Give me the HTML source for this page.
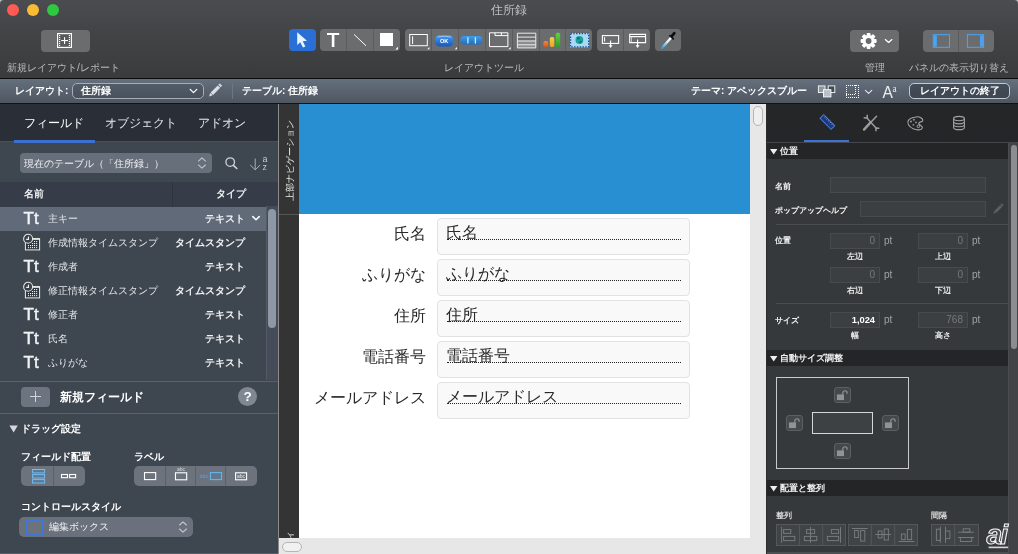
<!DOCTYPE html>
<html lang="ja">
<head>
<meta charset="utf-8">
<title>住所録</title>
<style>
*{box-sizing:border-box;margin:0;padding:0}
html,body{width:1018px;height:554px;overflow:hidden;background:#35383b}
body{font-family:"Liberation Sans",sans-serif;font-size:11px;color:#e6e6e6;position:relative;-webkit-font-smoothing:antialiased}
.abs,#app *{position:absolute}
#app{position:absolute;left:0;top:0;width:1018px;height:554px;overflow:hidden;will-change:transform}
.t{white-space:nowrap;line-height:1}
svg{display:block;overflow:visible}


/* title + toolbar */
#titlebar{left:0;top:0;width:1018px;height:78px;background:linear-gradient(#4b4c4f,#444547 35%,#3a3b3d)}
#tbline{left:0;top:78px;width:1018px;height:1px;background:#0c0c0d}
.light{width:12px;height:12px;border-radius:6px;top:4px}
.tbtn{background:#6b6c6e;border-radius:4px;height:22px;top:30px}
.tlabel{top:62.6px;font-size:10.4px;color:#b9babc;text-align:center}
.sep{width:1px;top:0;height:22px;background:#5b5c5f}

/* layout bar */
#lbar{left:0;top:79px;width:1018px;height:24px;background:linear-gradient(#66707c,#5a6470 45%,#4f5660)}
#lbline{left:0;top:103px;width:1018px;height:1px;background:#0b1220}
.lb{font-size:10px;font-weight:bold;color:#fff;top:86px}

/* left panel */
#left{left:0;top:104px;width:278px;height:450px;background:#3e4650}
#ltabs{left:0;top:0;width:278px;height:38px;background:#292e37}
.ltab{top:13px;font-size:12px;color:#e4e6e9}
.row{left:0;width:266px;height:24px}
.row .n{left:48px;top:7px;font-size:10px;color:#e3e5e8}
.row .ty{right:21px;top:7px;font-size:10px;color:#f0f1f3;font-weight:bold}
.row .tt{left:23.6px;top:2.6px;font-size:17px;font-weight:normal;color:#f2f3f5;-webkit-text-stroke:0.5px #f2f3f5;letter-spacing:0}
.bold{font-weight:bold}

/* centre */
#strip{left:279px;top:104px;width:20px;height:434px;background:#343434}
#blue{left:299px;top:104px;width:451px;height:110px;background:#2890d2}
#white{left:299px;top:214px;width:451px;height:324px;background:#fff}
#vsb{left:750px;top:104px;width:16px;height:434px;background:#e7e7e7}
#hsb{left:279px;top:538px;width:487px;height:16px;background:#e7e7e7}
.fbox{left:138px;width:253px;height:37px;background:#f9f9f9;border:1px solid #e2e2e2;border-radius:4px}
.fbox .v{left:8px;top:6px;font-size:16px;color:#2a2a2a}
.fbox .dl{left:9px;top:20px;width:234px;height:0;border-top:1px dotted #222}
.flab{right:324px;font-size:16px;color:#2a2a2a}

/* right panel */
#right{left:766px;top:104px;width:252px;height:450px;background:#36393c}
#rtabs{left:0;top:0;width:252px;height:39px;background:#252628}
.sec{left:0;width:242px;height:16px;background:#242527}
.sec .t{left:14px;top:4px;font-size:9px;font-weight:bold;color:#f0f0f0}
.rl{font-size:8.2px;font-weight:bold;color:#f2f2f2}
.rs{font-size:8.2px;font-weight:bold;color:#e8e8e8;text-align:center;width:40px}
.inp{height:16px;background:#3c3f42;border:1px solid #484b4e}
.inp .t{right:4px;top:2px;font-size:10px;color:#77797c}
.pt{font-size:10px;color:#a0a2a5}
.hr{height:1px;background:#4b4e51}
.lock{width:17px;height:16px;background:#45484b;border:1px solid #5d6063;border-radius:3px}
.ag{height:22px;border:1px solid #55585b;background:#414447}
</style>
</head>
<body>
<div id="app">

<!-- ================= TITLE / TOOLBAR ================= -->
<div style="left:0;top:0;width:4px;height:4px;background:#b9b9ba"></div><div style="left:1014px;top:0;width:4px;height:4px;background:#b9b9ba"></div>
<div id="titlebar" style="border-radius:4px 4px 0 0">
  <div class="light" style="left:7px;background:#fe5b54"></div>
  <div class="light" style="left:27px;background:#f8bd34"></div>
  <div class="light" style="left:47px;background:#2fc841"></div>
  <div class="t" style="left:0;width:1018px;text-align:center;top:4px;font-size:12px;color:#bebfc1">住所録</div>

  <div class="tbtn" id="b-new" style="left:41px;width:49px">
    <svg width="15" height="15" style="left:16px;top:3px">
      <rect x="0.6" y="0.6" width="13.8" height="13.8" fill="#58595b" stroke="#fff" stroke-width="1.2"/>
      <g fill="#fff"><rect x="2" y="2" width="1.2" height="1.1"/><rect x="2" y="4" width="1.2" height="1.1"/><rect x="2" y="6" width="1.2" height="1.1"/><rect x="2" y="8" width="1.2" height="1.1"/><rect x="2" y="10" width="1.2" height="1.1"/><rect x="2" y="12" width="1.2" height="1.1"/>
      <rect x="11.8" y="2" width="1.2" height="1.1"/><rect x="11.8" y="4" width="1.2" height="1.1"/><rect x="11.8" y="6" width="1.2" height="1.1"/><rect x="11.8" y="8" width="1.2" height="1.1"/><rect x="11.8" y="10" width="1.2" height="1.1"/><rect x="11.8" y="12" width="1.2" height="1.1"/>
      <rect x="4.2" y="7" width="6.8" height="1.1"/><rect x="7" y="4.2" width="1.1" height="6.8"/></g>
    </svg>
  </div>
  <div class="t tlabel" style="left:7px">新規レイアウト/レポート</div>

  <div class="tbtn" id="b-arrow" style="left:289px;top:29px;width:27px;background:#2a6fd6">
    <svg width="27" height="22" style="left:0;top:0"><path d="M8.2,3.3 L8.2,16 L11.2,13.2 L14,18.6 L16.4,17.4 L13.7,12.2 L18,11.8 Z" fill="#e6f5ff"/></svg>
  </div>
  <div class="tbtn" id="g1" style="left:320px;top:29px;width:80px"><div class="sep" style="left:26px"></div><div class="sep" style="left:53px"></div>
    <svg width="80" height="22" style="left:0;top:0">
      <rect x="7" y="4" width="12.2" height="2" fill="#fff"/><rect x="11.8" y="4" width="2.6" height="14" fill="#fff"/>
      <line x1="34" y1="5.4" x2="46" y2="16.8" stroke="#fff" stroke-width="1"/>
      <rect x="60" y="4" width="13" height="13" fill="#fff"/>
      <path d="M78,17.8 L78,20.4 L75.4,20.4 Z" fill="#fff"/>
    </svg>
  </div>
  <div class="tbtn" id="g2" style="left:405px;top:29px;width:187px"><div class="sep" style="left:26px"></div><div class="sep" style="left:53px"></div><div class="sep" style="left:80px"></div><div class="sep" style="left:107px"></div><div class="sep" style="left:134px"></div><div class="sep" style="left:160px"></div>
    <svg width="187" height="22" style="left:0;top:0">
      <defs>
        <linearGradient id="gok" x1="0" y1="0" x2="0" y2="1"><stop offset="0" stop-color="#4a9bee"/><stop offset="1" stop-color="#1659bd"/></linearGradient>
        <linearGradient id="gtab" x1="0" y1="0" x2="0" y2="1"><stop offset="0" stop-color="#3f9de6"/><stop offset="1" stop-color="#1f6fc0"/></linearGradient>
        <linearGradient id="gor" x1="0" y1="0" x2="0" y2="1"><stop offset="0" stop-color="#f08a3a"/><stop offset="1" stop-color="#d9531f"/></linearGradient>
        <linearGradient id="gye" x1="0" y1="0" x2="0" y2="1"><stop offset="0" stop-color="#f7d23b"/><stop offset="1" stop-color="#e6a51f"/></linearGradient>
        <linearGradient id="ggr" x1="0" y1="0" x2="0" y2="1"><stop offset="0" stop-color="#5fd23f"/><stop offset="1" stop-color="#2f9e22"/></linearGradient>
      </defs>
      <!-- field -->
      <rect x="4.7" y="5.5" width="17.6" height="11.2" fill="none" stroke="#fff" stroke-width="1"/>
      <line x1="7.6" y1="7.3" x2="7.6" y2="15" stroke="#fff" stroke-width="1"/>
      <path d="M24.4,18 L24.4,20.2 L22.2,20.2 Z" fill="#fff"/>
      <!-- OK button -->
      <rect x="29.8" y="6.2" width="18.8" height="11.2" rx="4.5" fill="url(#gok)"/>
      <path d="M32.5,8 Q39,6.3 46,8" fill="none" stroke="#a9d4ff" stroke-width="0.8"/>
      <text x="39.2" y="14.1" font-family="Liberation Sans, sans-serif" font-size="5.6" font-weight="bold" fill="#fff" text-anchor="middle">OK</text>
      <path d="M52,18 L52,20.2 L49.8,20.2 Z" fill="#fff"/>
      <!-- button bar -->
      <rect x="55.4" y="7.1" width="21.9" height="8.3" rx="4" fill="url(#gtab)"/>
      <line x1="62.9" y1="8.2" x2="62.9" y2="14.6" stroke="#c9e9ff" stroke-width="1.3"/>
      <line x1="70.4" y1="8.2" x2="70.4" y2="14.6" stroke="#c9e9ff" stroke-width="1.3"/>
      <!-- tab control -->
      <path d="M84.5,3.8 H102.9 V17.6 H84.5 Z M90,3.8 V6.6 H102.9 M96.4,3.8 V6.6" fill="none" stroke="#fff" stroke-width="1"/>
      <path d="M105.6,18 L105.6,20.2 L103.4,20.2 Z" fill="#fff"/>
      <!-- portal -->
      <rect x="112.4" y="11.5" width="18.4" height="7.4" fill="#8c8d8f"/>
      <path d="M112.4,4.2 H130.8 V18.9 H112.4 Z M112.4,8.1 H130.8 M112.4,12 H130.8 M112.4,15.8 H130.8" fill="none" stroke="#ececec" stroke-width="1"/>
      <!-- chart -->
      <rect x="138.4" y="12.1" width="4.7" height="6" rx="1.8" fill="url(#gor)"/>
      <rect x="144.8" y="8" width="4.5" height="10.1" rx="1.8" fill="url(#gye)"/>
      <rect x="150.7" y="3.8" width="4.5" height="14.3" rx="1.8" fill="url(#ggr)"/>
      <!-- web viewer -->
      <rect x="165" y="4" width="19.2" height="14.4" fill="#a9d9f4"/>
      <rect x="165.5" y="4.5" width="18.2" height="13.4" fill="none" stroke="#1d4f8c" stroke-width="1.4" stroke-dasharray="1.4 1.4"/>
      <circle cx="174.4" cy="11" r="3.9" fill="#17a3a8"/>
      <path d="M172,8.6 q2,-1 3,0.4 q-0.4,1.6 -2,1.8 q-1.4,-0.6 -1,-2.2 Z M174.6,12 q1.8,-0.6 2.6,0.6 q-0.8,1.8 -2.4,1.8 q-0.8,-1 -0.2,-2.4 Z" fill="#0c7a46"/>
    </svg>
  </div>
  <div class="tbtn" id="g3" style="left:597px;top:29px;width:53px"><div class="sep" style="left:26px"></div>
    <svg width="54" height="22" style="left:0;top:0">
      <rect x="5.4" y="6.6" width="16.2" height="7.8" fill="none" stroke="#fff" stroke-width="1.1"/>
      <line x1="7.6" y1="8.2" x2="7.6" y2="12.6" stroke="#fff" stroke-width="1"/>
      <line x1="13.6" y1="11.4" x2="13.6" y2="17" stroke="#fff" stroke-width="1.1"/>
      <path d="M11.6,16.2 H15.6 L13.6,18.9 Z" fill="#fff"/>
      <path d="M32.7,5.4 H48.6 V13.6 H32.7 Z M32.7,7.6 H48.6" fill="none" stroke="#fff" stroke-width="1.1"/>
      <line x1="34.4" y1="7.6" x2="34.4" y2="13.6" stroke="#fff" stroke-width="0.8" opacity=".8"/>
      <line x1="40.6" y1="10.6" x2="40.6" y2="17" stroke="#fff" stroke-width="1.1"/>
      <path d="M38.6,16.2 H42.6 L40.6,18.9 Z" fill="#fff"/>
    </svg>
  </div>
  <div class="tbtn" id="g4" style="left:655px;top:29px;width:26px">
    <svg width="26" height="22" style="left:0;top:0">
      <defs><linearGradient id="gdrop" gradientUnits="userSpaceOnUse" x1="16" y1="9" x2="7.5" y2="18.5"><stop offset="0" stop-color="#ffffff"/><stop offset="0.45" stop-color="#cfeaf8"/><stop offset="1" stop-color="#3a9ad6"/></linearGradient></defs>
      <path d="M15.8,9 L9.6,16 Q8.2,17.4 7.2,18.8" stroke="url(#gdrop)" stroke-width="2.5" stroke-linecap="round" fill="none"/>
      <path d="M19.3,4.1 L16.7,7.3" stroke="#0e0f12" stroke-width="2.7" stroke-linecap="round"/>
      <path d="M15,6.7 L18.2,9.8" stroke="#0e0f12" stroke-width="1.8" stroke-linecap="round"/>
    </svg>
  </div>
  <div class="t tlabel" style="left:384px;width:200px">レイアウトツール</div>

  <div class="tbtn" id="b-gear" style="left:850px;width:49px">
    <svg width="49" height="22" style="left:0;top:0">
      <g transform="translate(18.6,11)" fill="#fff">
        <g id="teeth"><rect x="-1.9" y="-8" width="3.8" height="16" rx="0.8"/><rect x="-1.9" y="-8" width="3.8" height="16" rx="0.8" transform="rotate(45)"/><rect x="-1.9" y="-8" width="3.8" height="16" rx="0.8" transform="rotate(90)"/><rect x="-1.9" y="-8" width="3.8" height="16" rx="0.8" transform="rotate(135)"/></g>
        <circle r="6.1"/><circle r="2.9" fill="#6b6c6e"/>
      </g>
      <path d="M35.3,9.6 L38.6,12.4 L41.9,9.6" fill="none" stroke="#fff" stroke-width="1.3" stroke-linecap="round" stroke-linejoin="round"/>
    </svg>
  </div>
  <div class="t tlabel" style="left:825px;width:100px">管理</div>
  <div class="tbtn" id="b-panel" style="left:923px;width:71px"><div class="sep" style="left:35px"></div>
    <svg width="71" height="22" style="left:0;top:0">
      <rect x="10.3" y="4.7" width="16.2" height="12.6" fill="none" stroke="#4aa6f5" stroke-width="1"/>
      <rect x="11" y="5.4" width="2.8" height="11.2" fill="#4aa6f5"/>
      <rect x="44.4" y="4.7" width="16.2" height="12.6" fill="none" stroke="#4aa6f5" stroke-width="1"/>
      <rect x="57.1" y="5.4" width="2.8" height="11.2" fill="#4aa6f5"/>
    </svg>
  </div>
  <div class="t tlabel" style="left:899px;width:119px">パネルの表示切り替え</div>
</div>
<div id="tbline"></div>

<!-- ================= LAYOUT BAR ================= -->
<div id="lbar"></div>
<div id="lbline"></div>
<div class="t lb" style="left:15px">レイアウト:</div>
<div id="lsel" style="left:72px;top:83px;width:132px;height:16px;border:1px solid #a4aeb9;border-radius:5px;background:rgba(48,56,68,.28)"></div>
<svg width="1018" height="24" style="left:0;top:79px">
  <path d="M190.2,10.4 L193.5,13.6 L196.8,10.4" fill="none" stroke="#fff" stroke-width="1.3" stroke-linecap="round" stroke-linejoin="round"/>
  <g transform="translate(215,11.6) rotate(45)" fill="#d9dfe6"><rect x="-1.7" y="-8.4" width="3.4" height="2"/><rect x="-1.7" y="-5.6" width="3.4" height="10"/><path d="M-1.7,4.9 H1.7 L0,8.4 Z"/></g>
  <rect x="818.4" y="6.9" width="6.6" height="6.6" fill="#8f98a1" stroke="#e8ebee" stroke-width="1"/>
  <rect x="828.2" y="6.9" width="6.6" height="6.6" fill="#414952" stroke="#e8ebee" stroke-width="1"/>
  <rect x="823.5" y="10.7" width="7.4" height="7.2" fill="#b9c0c7" stroke="#f4f6f7" stroke-width="1"/>
  <path d="M846,6h1v1h-1zM846,8h1v1h-1zM846,10h1v1h-1zM846,12h1v1h-1zM846,14h1v1h-1zM846,15h1v1h-1zM846,16h1v1h-1zM846,18h1v1h-1zM848,6h1v1h-1zM848,15h1v1h-1zM848,18h1v1h-1zM850,6h1v1h-1zM850,15h1v1h-1zM850,18h1v1h-1zM852,6h1v1h-1zM852,15h1v1h-1zM852,18h1v1h-1zM854,6h1v1h-1zM854,15h1v1h-1zM854,18h1v1h-1zM855,6h1v1h-1zM855,8h1v1h-1zM855,10h1v1h-1zM855,12h1v1h-1zM855,14h1v1h-1zM856,6h1v1h-1zM856,18h1v1h-1zM858,6h1v1h-1zM858,8h1v1h-1zM858,10h1v1h-1zM858,12h1v1h-1zM858,14h1v1h-1zM858,16h1v1h-1zM858,18h1v1h-1z" fill="#fff" shape-rendering="crispEdges"/>
  <path d="M865.4,11.4 L868.6,14.4 L871.8,11.4" fill="none" stroke="#e4e8ec" stroke-width="1.1" stroke-linecap="round" stroke-linejoin="round"/>
  <text x="882.6" y="18.6" font-family="Liberation Sans, sans-serif" font-size="15.6" fill="#e9ecef">A</text>
  <text x="892.4" y="12.8" font-family="Liberation Serif, serif" font-size="9.4" fill="#e9ecef">a</text>
</svg>
<div class="t lb" style="left:81px">住所録</div>
<div style="left:232px;top:83px;width:1px;height:16px;background:#6d7782"></div>
<div class="t lb" style="left:242px">テーブル: 住所録</div>
<div class="t lb" style="left:691px">テーマ: アペックスブルー</div>
<div id="lend" style="left:909px;top:83px;width:101px;height:16px;border:1px solid #c3c9d0;border-radius:5px;background:rgba(44,52,64,.55)"></div>
<div class="t lb" style="left:909px;width:101px;text-align:center">レイアウトの終了</div>

<!-- ================= LEFT PANEL ================= -->
<div id="left">
  <div id="ltabs">
    <div class="t ltab" style="left:24px;color:#fff">フィールド</div>
    <div class="t ltab" style="left:105px">オブジェクト</div>
    <div class="t ltab" style="left:198px">アドオン</div>
    <div style="left:0;top:37px;width:278px;height:1px;background:#4a505a"></div>
    <div style="left:14px;top:36px;width:81px;height:3px;background:#3b6fd0"></div>
  </div>
  <div id="tsel" style="left:20px;top:49px;width:192px;height:20px;border-radius:4px;background:#676f7b">
    <svg width="10" height="14" style="left:177px;top:3px"><path d="M1.6,5 L5,1.8 L8.4,5 M1.6,9 L5,12.2 L8.4,9" fill="none" stroke="#bcc2cb" stroke-width="1.1" stroke-linecap="round" stroke-linejoin="round"/></svg>
  </div>
  <svg width="14" height="14" style="left:224px;top:52px"><circle cx="6.2" cy="6.1" r="4.3" fill="none" stroke="#cfd4da" stroke-width="1.3"/><line x1="9.4" y1="9.3" x2="12.8" y2="12.5" stroke="#cfd4da" stroke-width="1.6" stroke-linecap="round"/></svg>
  <svg width="20" height="16" style="left:249px;top:52px"><path d="M6.2,2.6 V13.6 M1.2,9 L6.2,13.8 L11.2,9" fill="none" stroke="#a9b0ba" stroke-width="1"/><text x="13.4" y="5.8" font-family="Liberation Sans, sans-serif" font-size="9" fill="#c3c8d0">a</text><text x="13.6" y="14.2" font-family="Liberation Sans, sans-serif" font-size="9" fill="#c3c8d0">z</text></svg>
  <div class="t" style="left:24px;top:55px;font-size:10px;color:#f1f2f4">現在のテーブル（「住所録」）</div>

  <div id="lhead" style="left:0;top:78px;width:278px;height:25px;background:#363d48">
    <div class="t" style="left:24px;top:7px;font-size:10px;color:#f0f1f3;font-weight:bold">名前</div>
    <div class="t" style="right:32px;top:7px;font-size:10px;color:#f0f1f3;font-weight:bold">タイプ</div>
    <div style="left:172px;top:0;width:1px;height:25px;background:#2f353f"></div>
  </div>

  <div class="row" style="top:103px;background:#606a78"><div class="t tt">Tt</div><div class="t n">主キー</div><div class="t ty">テキスト</div><svg width="10" height="8" style="left:251px;top:8px"><path d="M1.8,1.6 L5,4.8 L8.2,1.6" fill="none" stroke="#fff" stroke-width="1.5" stroke-linecap="round" stroke-linejoin="round"/></svg></div>
  <div class="row" style="top:127px"><svg width="20" height="16" style="left:22px;top:3px"><rect x="3.4" y="4.7" width="14.2" height="11.2" fill="#30353d" stroke="#ececec" stroke-width="1"/><rect x="3.4" y="4.2" width="14.2" height="1.6" fill="#ececec"/><circle cx="6.1" cy="4.7" r="4.5" fill="#3a4049" stroke="#e6e6e6" stroke-width="1.1"/><path d="M6.5,2.4 V5.4 H4.2" fill="none" stroke="#f2f2f2" stroke-width="1.1"/><g fill="#f0f0f0"><rect x="12" y="7" width="1.1" height="1.1"/><rect x="14.1" y="7" width="1.1" height="1.1"/><rect x="10" y="9" width="1.1" height="1.1"/><rect x="12" y="9" width="1.1" height="1.1"/><rect x="14.1" y="9" width="1.1" height="1.1"/><rect x="5.9" y="11" width="1.1" height="1.1"/><rect x="8" y="11" width="1.1" height="1.1"/><rect x="10" y="11" width="1.1" height="1.1"/><rect x="12" y="11" width="1.1" height="1.1"/><rect x="14.1" y="11" width="1.1" height="1.1"/><rect x="5.9" y="13.1" width="1.1" height="1.1"/><rect x="8" y="13.1" width="1.1" height="1.1"/><rect x="10" y="13.1" width="1.1" height="1.1"/><rect x="12" y="13.1" width="1.1" height="1.1"/><rect x="14.1" y="13.1" width="1.1" height="1.1"/></g></svg><div class="t n">作成情報タイムスタンプ</div><div class="t ty">タイムスタンプ</div></div>
  <div class="row" style="top:151px"><div class="t tt">Tt</div><div class="t n">作成者</div><div class="t ty">テキスト</div></div>
  <div class="row" style="top:175px"><svg width="20" height="16" style="left:22px;top:3px"><rect x="3.4" y="4.7" width="14.2" height="11.2" fill="#30353d" stroke="#ececec" stroke-width="1"/><rect x="3.4" y="4.2" width="14.2" height="1.6" fill="#ececec"/><circle cx="6.1" cy="4.7" r="4.5" fill="#3a4049" stroke="#e6e6e6" stroke-width="1.1"/><path d="M6.5,2.4 V5.4 H4.2" fill="none" stroke="#f2f2f2" stroke-width="1.1"/><g fill="#f0f0f0"><rect x="12" y="7" width="1.1" height="1.1"/><rect x="14.1" y="7" width="1.1" height="1.1"/><rect x="10" y="9" width="1.1" height="1.1"/><rect x="12" y="9" width="1.1" height="1.1"/><rect x="14.1" y="9" width="1.1" height="1.1"/><rect x="5.9" y="11" width="1.1" height="1.1"/><rect x="8" y="11" width="1.1" height="1.1"/><rect x="10" y="11" width="1.1" height="1.1"/><rect x="12" y="11" width="1.1" height="1.1"/><rect x="14.1" y="11" width="1.1" height="1.1"/><rect x="5.9" y="13.1" width="1.1" height="1.1"/><rect x="8" y="13.1" width="1.1" height="1.1"/><rect x="10" y="13.1" width="1.1" height="1.1"/><rect x="12" y="13.1" width="1.1" height="1.1"/><rect x="14.1" y="13.1" width="1.1" height="1.1"/></g></svg><div class="t n">修正情報タイムスタンプ</div><div class="t ty">タイムスタンプ</div></div>
  <div class="row" style="top:199px"><div class="t tt">Tt</div><div class="t n">修正者</div><div class="t ty">テキスト</div></div>
  <div class="row" style="top:223px"><div class="t tt">Tt</div><div class="t n">氏名</div><div class="t ty">テキスト</div></div>
  <div class="row" style="top:247px"><div class="t tt">Tt</div><div class="t n">ふりがな</div><div class="t ty">テキスト</div></div>

  <div id="lsb" style="left:266px;top:102px;width:12px;height:174px;background:#454c57;border-left:1px solid #525a65"></div>
  <div style="left:268px;top:105px;width:8px;height:119px;border-radius:4px;background:#8d97a5"></div>

  <div style="left:0;top:277px;width:278px;height:1px;background:#59616c"></div>
  <div id="addbtn" style="left:21px;top:283px;width:29px;height:20px;border-radius:4px;background:#6c747f"><svg width="29" height="20" style="left:0;top:0"><path d="M9,9.5 H20 M14.5,4 V15" fill="none" stroke="#d2d6db" stroke-width="1"/></svg></div>
  <div class="t bold" style="left:60px;top:287px;font-size:12px;color:#fff">新規フィールド</div>
  <div id="help" style="left:238px;top:283px;width:19px;height:19px;border-radius:10px;background:#7f8792"></div>
  <div class="t bold" style="left:238px;top:286px;width:19px;text-align:center;font-size:13.5px;color:#fff">?</div>
  <div style="left:0;top:309px;width:278px;height:1px;background:#59616c"></div>

  <svg width="10" height="8" style="left:9px;top:321px"><path d="M0.4,0.6 H8.8 L4.6,7.4 Z" fill="#d4d8dd"/></svg><div class="t bold" style="left:21px;top:320px;font-size:10px;color:#fff">ドラッグ設定</div>
  <div class="t bold" style="left:21px;top:348px;font-size:10px;color:#fff">フィールド配置</div>
  <div class="t bold" style="left:134px;top:348px;font-size:10px;color:#fff">ラベル</div>
  <div id="fg1" style="left:21px;top:362px;width:64px;height:20px;border-radius:5px;background:#6c737d"><div style="left:32px;top:0;width:1px;height:20px;background:#5a616b"></div>
    <svg width="64" height="20" style="left:0;top:0"><g fill="#4d7ea8" fill-opacity=".55" stroke="#72bdf2" stroke-width="1"><rect x="11.6" y="3.5" width="12" height="3.4"/><rect x="11.6" y="8.6" width="12" height="3.4"/><rect x="11.6" y="13.6" width="12" height="3.4"/></g><g fill="none" stroke="#fff" stroke-width="1.1"><rect x="40.5" y="8.5" width="6" height="3.2"/><rect x="48.6" y="8.5" width="6" height="3.2"/></g></svg></div>
  <div id="fg2" style="left:134px;top:362px;width:123px;height:20px;border-radius:5px;background:#6c737d"><div style="left:31px;top:0;width:1px;height:20px;background:#5a616b"></div><div style="left:61px;top:0;width:1px;height:20px;background:#5a616b"></div><div style="left:91px;top:0;width:1px;height:20px;background:#5a616b"></div>
    <svg width="123" height="20" style="left:0;top:0"><g fill="none" stroke="#fff" stroke-width="1.1"><rect x="10.5" y="6.6" width="11.2" height="7"/><rect x="41.5" y="6.8" width="11.2" height="7"/><rect x="101.6" y="6.8" width="11" height="7"/></g>
    <rect x="76.4" y="6.6" width="11.2" height="7" fill="#567fa3" fill-opacity=".5" stroke="#69b4ec" stroke-width="1.1"/>
    <text x="47" y="4.9" font-family="Liberation Sans, sans-serif" font-size="5" fill="#d9dce0" text-anchor="middle">abc</text>
    <text x="70" y="12" font-family="Liberation Sans, sans-serif" font-size="5" font-weight="bold" fill="#4f9be0" text-anchor="middle">abc</text>
    <text x="107.1" y="12" font-family="Liberation Sans, sans-serif" font-size="5" fill="#e6e8eb" text-anchor="middle">abc</text></svg></div>
  <div class="t bold" style="left:21px;top:398px;font-size:10px;color:#fff">コントロールスタイル</div>
  <div id="csel" style="left:19px;top:413px;width:174px;height:20px;border-radius:5px;background:#6a717c">
    <div style="left:7px;top:2px;width:18px;height:16px;border:2px solid #3f78d2;background:#6d727b"></div>
    <svg width="10" height="14" style="left:159px;top:3px"><path d="M1.6,5 L5,1.8 L8.4,5 M1.6,9 L5,12.2 L8.4,9" fill="none" stroke="#c3c8cf" stroke-width="1.1" stroke-linecap="round" stroke-linejoin="round"/></svg></div>
  <div class="t" style="left:49px;top:418px;font-size:10px;color:#f1f2f4">編集ボックス</div>
  <div style="left:0;top:449px;width:278px;height:1px;background:#555d68"></div>
</div>
<div style="left:278px;top:104px;width:1px;height:450px;background:#8a8a8a"></div>

<!-- ================= CENTRE ================= -->
<div id="strip" style="overflow:hidden">
  <div style="left:0;top:110px;width:20px;height:1px;background:#555"></div>
  <div class="t" style="left:10.5px;top:55.5px;font-size:8.7px;color:#ececec;transform:translate(-50%,-50%) rotate(-90deg)">上部ナビゲーション</div>
  <div class="t" style="left:10.5px;top:440px;font-size:8.7px;color:#ececec;transform:translate(-50%,-50%) rotate(-90deg)">ボディ</div>
</div>
<div id="blue"></div>
<div id="white">
  <div class="t flab" style="top:12px">氏名</div>
  <div class="t flab" style="top:53px">ふりがな</div>
  <div class="t flab" style="top:94px">住所</div>
  <div class="t flab" style="top:135px">電話番号</div>
  <div class="t flab" style="top:176px">メールアドレス</div>
  <div class="fbox" style="top:4px"><div class="t v">氏名</div><div class="dl"></div></div>
  <div class="fbox" style="top:45px"><div class="t v">ふりがな</div><div class="dl"></div></div>
  <div class="fbox" style="top:86px"><div class="t v">住所</div><div class="dl"></div></div>
  <div class="fbox" style="top:127px"><div class="t v">電話番号</div><div class="dl"></div></div>
  <div class="fbox" style="top:168px"><div class="t v">メールアドレス</div><div class="dl"></div></div>
</div>
<div id="vsb"><div style="left:3px;top:2px;width:10px;height:20px;border-radius:5px;background:#efefef;border:1px solid #b4b4b4"></div></div>
<div id="hsb"><div style="left:3px;top:4px;width:20px;height:10px;border-radius:5px;background:#f1f1f1;border:1px solid #b4b4b4"></div></div>

<!-- ================= RIGHT PANEL ================= -->
<div id="right">
  <div id="rtabs">
    <div style="left:38px;top:36px;width:45px;height:3px;background:#3d72d6"></div>
    <svg width="252" height="38" style="left:0;top:0">
      <g transform="translate(61.4,18) rotate(45)"><rect x="-7.8" y="-2.6" width="15.6" height="5.2" fill="#1b3885" stroke="#4a7edb" stroke-width="1"/><path d="M-5,-2.6 v1.8 M-2.5,-2.6 v1.8 M0,-2.6 v1.8 M2.5,-2.6 v1.8 M5,-2.6 v1.8" stroke="#7fa6ea" stroke-width="0.7"/></g>
      <g stroke="#9d9d9d" fill="none" stroke-linecap="round">
        <path d="M98,25.6 L104.6,18.4" stroke-width="2.4"/><path d="M104.6,18.4 L110.6,12.2" stroke-width="1.5"/>
        <path d="M101.2,14.2 L110,24" stroke-width="1.4"/>
        <path d="M101.2,14.2 L98.2,13.8 M101.2,14.2 L101.2,11.2 M110,24 L112.8,24.2 M110,24 L110,26.8" stroke-width="1.5"/>
      </g>
      <g transform="translate(0,3.8)"><path d="M148.8,9.4 C153.6,8 157.4,11 156.6,13.2 C155.8,14.6 153,13.4 152.8,15.6 C152.6,17.4 156.8,17.6 156.4,20 C155.6,22.6 150.6,22.6 147.2,21 C142.6,19 140.8,15.2 142.4,12.6 C143.4,10.8 146,9.8 148.8,9.4 Z" fill="none" stroke="#a3a3a3" stroke-width="1.1"/>
      <g fill="#999"><circle cx="145" cy="13.8" r="1"/><circle cx="147.9" cy="11.9" r="1"/><circle cx="150" cy="14.6" r="0.9"/><circle cx="147.4" cy="17" r="0.9"/></g><circle cx="152.4" cy="18.5" r="1.3" fill="none" stroke="#b0b0b0" stroke-width="0.9"/></g>
      <g fill="none" stroke="#a3a3a3" stroke-width="1.1"><ellipse cx="193" cy="14.6" rx="5.4" ry="2.2"/><path d="M187.6,14.6 V23.4 C187.6,26.4 198.4,26.4 198.4,23.4 V14.6 M187.6,17.6 C187.6,20.6 198.4,20.6 198.4,17.6 M187.6,20.5 C187.6,23.5 198.4,23.5 198.4,20.5"/></g>
    </svg>
  </div>
  <div style="left:0;top:38px;width:252px;height:1px;background:#45474a"></div>
  <div class="sec" style="top:39px"><svg width="8" height="6" style="left:4px;top:6px"><path d="M0,0 H7.4 L3.7,5.6 Z" fill="#efefef"/></svg><div class="t">位置</div></div>

  <div class="t rl" style="left:9px;top:78.5px">名前</div>
  <div class="inp" style="left:64px;top:73px;width:156px"></div>
  <div class="t rl" style="left:9px;top:102.5px">ポップアップヘルプ</div>
  <div class="inp" style="left:94px;top:97px;width:126px"></div>
  <svg width="14" height="14" style="left:225px;top:98px"><g transform="translate(7,7) rotate(45)" fill="#5d6063"><rect x="-1.4" y="-6.6" width="2.8" height="1.6"/><rect x="-1.4" y="-4.4" width="2.8" height="7.8"/><path d="M-1.4,3.8 H1.4 L0,6.6 Z"/></g></svg>
  <div class="hr" style="left:10px;top:120px;width:232px"></div>

  <div class="t rl" style="left:9px;top:133px">位置</div>
  <div class="inp" style="left:64px;top:129px;width:50px"><div class="t">0</div></div><div class="t pt" style="left:118px;top:132px">pt</div>
  <div class="inp" style="left:152px;top:129px;width:50px"><div class="t">0</div></div><div class="t pt" style="left:206px;top:132px">pt</div>
  <div class="t rs" style="left:69px;top:149px">左辺</div>
  <div class="t rs" style="left:157px;top:149px">上辺</div>
  <div class="inp" style="left:64px;top:163px;width:50px"><div class="t">0</div></div><div class="t pt" style="left:118px;top:166px">pt</div>
  <div class="inp" style="left:152px;top:163px;width:50px"><div class="t">0</div></div><div class="t pt" style="left:206px;top:166px">pt</div>
  <div class="t rs" style="left:69px;top:183px">右辺</div>
  <div class="t rs" style="left:157px;top:183px">下辺</div>
  <div class="hr" style="left:10px;top:199px;width:232px"></div>

  <div class="t rl" style="left:9px;top:212.5px">サイズ</div>
  <div class="inp" style="left:64px;top:208px;width:50px"><div class="t" style="color:#fff;font-weight:bold;font-size:9.3px;right:4px;top:3px">1,024</div></div><div class="t pt" style="left:118px;top:211px">pt</div>
  <div class="inp" style="left:152px;top:208px;width:50px"><div class="t">768</div></div><div class="t pt" style="left:206px;top:211px">pt</div>
  <div class="t rs" style="left:69px;top:228px">幅</div>
  <div class="t rs" style="left:157px;top:228px">高さ</div>

  <div class="sec" style="top:246px"><svg width="8" height="6" style="left:4px;top:6px"><path d="M0,0 H7.4 L3.7,5.6 Z" fill="#efefef"/></svg><div class="t">自動サイズ調整</div></div>
  <div style="left:10px;top:273px;width:133px;height:92px;border:1px solid #c9cbcd"></div>
  <div style="left:46px;top:308px;width:61px;height:22px;border:1px solid #d5d7d9;background:#3e4144"></div>
  <div class="lock" style="left:68px;top:283px"><svg width="17" height="16" style="left:-1px;top:-1px"><rect x="2.9" y="7.4" width="7.1" height="5.7" fill="#909395"/><path d="M8.8,7.4 V5.9 A2.15,2.15 0 0 1 13.1,5.9 V6.7" fill="none" stroke="#909395" stroke-width="1.2"/></svg></div>
  <div class="lock" style="left:20px;top:311px"><svg width="17" height="16" style="left:-1px;top:-1px"><rect x="2.9" y="7.4" width="7.1" height="5.7" fill="#909395"/><path d="M8.8,7.4 V5.9 A2.15,2.15 0 0 1 13.1,5.9 V6.7" fill="none" stroke="#909395" stroke-width="1.2"/></svg></div>
  <div class="lock" style="left:116px;top:311px"><svg width="17" height="16" style="left:-1px;top:-1px"><rect x="2.9" y="7.4" width="7.1" height="5.7" fill="#909395"/><path d="M8.8,7.4 V5.9 A2.15,2.15 0 0 1 13.1,5.9 V6.7" fill="none" stroke="#909395" stroke-width="1.2"/></svg></div>
  <div class="lock" style="left:68px;top:339px"><svg width="17" height="16" style="left:-1px;top:-1px"><rect x="2.9" y="7.4" width="7.1" height="5.7" fill="#909395"/><path d="M8.8,7.4 V5.9 A2.15,2.15 0 0 1 13.1,5.9 V6.7" fill="none" stroke="#909395" stroke-width="1.2"/></svg></div>

  <div class="sec" style="top:376px"><svg width="8" height="6" style="left:4px;top:6px"><path d="M0,0 H7.4 L3.7,5.6 Z" fill="#efefef"/></svg><div class="t">配置と整列</div></div>
  <div class="t rl" style="left:10px;top:407.5px;color:#d9d9d9">整列</div>
  <div class="t rl" style="left:165px;top:407.5px;color:#d9d9d9">間隔</div>
  <div class="ag" style="left:10px;top:420px;width:70px"><svg width="70" height="22" style="left:-1px;top:-1px"><path d="M23.5,0 V22 M46.7,0 V22" stroke="#55585b" stroke-width="1"/><g fill="none" stroke="#76797c" stroke-width="1"><path d="M5.6,3 V18.8"/><rect x="7.6" y="5.6" width="7.2" height="3.8"/><rect x="7.6" y="12.4" width="11.2" height="4.2"/><path d="M34.5,3 V18.8"/><rect x="30.6" y="5.6" width="8" height="3.8"/><rect x="28.4" y="12.4" width="12.4" height="4.2"/><path d="M64.5,3 V18.8"/><rect x="55.4" y="5.6" width="7.2" height="3.8"/><rect x="51.4" y="12.4" width="11.2" height="4.2"/></g></svg></div>
  <div class="ag" style="left:82px;top:420px;width:70px"><svg width="70" height="22" style="left:-1px;top:-1px"><path d="M23.3,0 V22 M46.7,0 V22" stroke="#55585b" stroke-width="1"/><g fill="none" stroke="#76797c" stroke-width="1"><path d="M4,4.5 H19.6"/><rect x="6.6" y="6.5" width="3.8" height="7"/><rect x="12.6" y="6.5" width="4.2" height="10.6"/><path d="M27.4,10.5 H43"/><rect x="30.2" y="7" width="3.8" height="7"/><rect x="36.2" y="5" width="4.2" height="11"/><path d="M50.6,17.5 H66.4"/><rect x="53.4" y="10" width="3.8" height="5.6"/><rect x="59.4" y="5.4" width="4.2" height="10.2"/></g></svg></div>
  <div class="ag" style="left:165px;top:420px;width:48px"><svg width="48" height="22" style="left:-1px;top:-1px"><path d="M23.7,0 V22" stroke="#55585b" stroke-width="1"/><g fill="none" stroke="#76797c" stroke-width="1"><path d="M9.4,2.6 V18.8 M14.5,2.6 V18.8"/><rect x="5.4" y="5.2" width="4" height="11.2"/><rect x="14.5" y="7" width="4.4" height="7.6"/><path d="M27.2,8.2 H43 M27.2,13.5 H43"/><rect x="32.2" y="4.8" width="6.6" height="3.4"/><rect x="29.4" y="13.5" width="11.2" height="4"/></g></svg></div>
  <div style="left:0;top:448px;width:242px;height:2px;background:#4c4f52"></div>

  <div id="rsb" style="left:242px;top:39px;width:10px;height:411px;background:#414346;border-left:1px solid #4b4d50"></div>
  <div style="left:245px;top:41px;width:6px;height:204px;border-radius:3px;background:#8b8d8f"></div>
  <svg width="30" height="26" style="left:219px;top:419px"><text x="1.6" y="21.4" font-family="Liberation Sans, sans-serif" font-size="28" font-weight="bold" font-style="italic" fill="#4a4c4f" stroke="#f4f4f4" stroke-width="1.1" letter-spacing="-1.8">ai</text><rect x="3.6" y="23.6" width="19.6" height="1.6" fill="#d6d6d6"/></svg>
</div>
<div style="left:766px;top:104px;width:1px;height:450px;background:#2a2c2e"></div>

</div>
</body>
</html>
